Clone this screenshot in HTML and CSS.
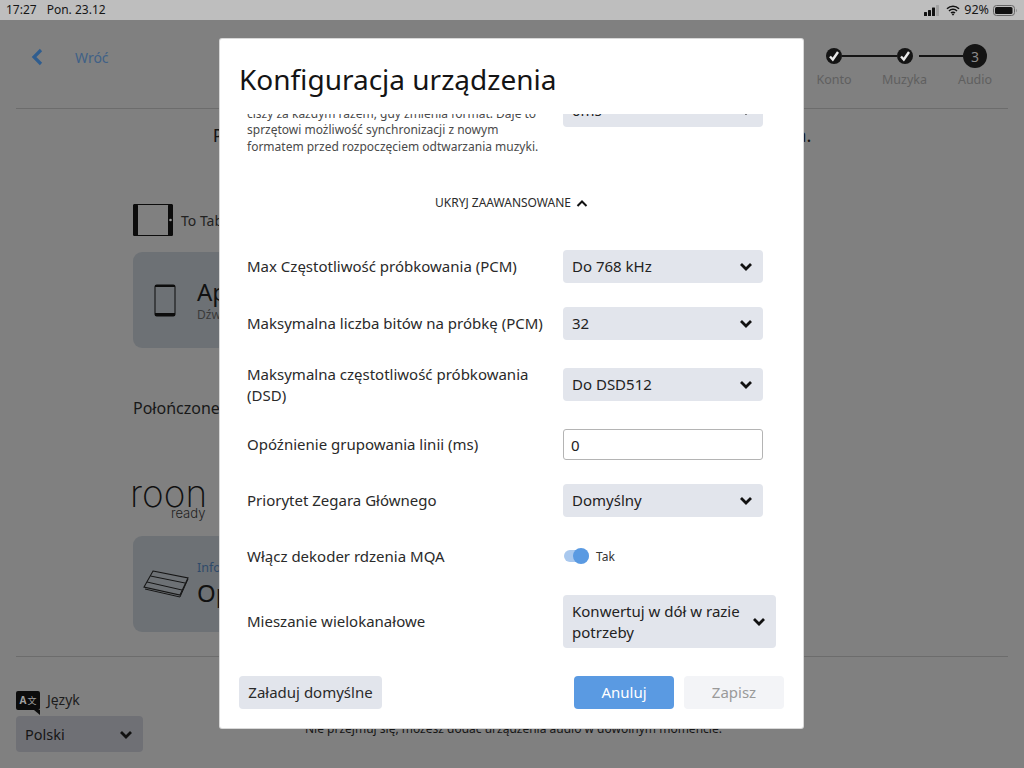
FILE: index.html
```html
<!DOCTYPE html>
<html lang="pl">
<head>
<meta charset="utf-8">
<title>Konfiguracja urządzenia</title>
<link rel="stylesheet" href="styles.css">
</head>
<body>
<div class="status">
  <div class="status-left"><span>17:27</span><span>Pon. 23.12</span></div>
  <div class="status-right">
    <svg class="sig" width="16" height="11" viewBox="0 0 16 11"><rect x="0" y="7" width="3" height="4" rx=".5"/><rect x="4" y="5" width="3" height="6" rx=".5"/><rect x="8" y="2.500" width="3" height="8.500" rx=".5"/><rect x="12" y="0" width="3" height="11" rx=".5" fill="#a2a2a2"/></svg>
    <svg width="14" height="11" viewBox="0 0 14 11"><path d="M1 3.800a8.500 8.500 0 0 1 12 0M3 6a5.600 5.600 0 0 1 8 0M5 8.100a2.800 2.800 0 0 1 4 0" fill="none" stroke="#111" stroke-width="1.500"/><path d="M5.700 9l1.300 1.700L8.300 9a2 2 0 0 0-2.600 0z" fill="#111"/></svg>
    <span>92%</span>
    <svg width="24" height="11" viewBox="0 0 24 11"><rect x=".5" y=".5" width="21" height="10" rx="3" fill="none" stroke="#666"/><rect x="2" y="2" width="17.500" height="7" rx="1.500" fill="#111"/><path d="M23 3.700c.7.300.7 3.300 0 3.600z" fill="#666"/></svg>
  </div>
</div>

<div class="page">
  <header class="top">
    <a class="back">
      <svg width="12" height="18" viewBox="0 0 12 18"><path d="M10 2L3 9l7 7" fill="none" stroke="#2f5d8f" stroke-width="3.200"/></svg>
      <span>Wróć</span>
    </a>
    <div class="stepper">
      <div class="dots">
        <span class="dot"><svg width="12" height="12" viewBox="0 0 12 12"><path d="M2 6.500l2.800 3L10 2" fill="none" stroke="#e8e8e8" stroke-width="2.400"/></svg></span>
        <span class="link l1"></span>
        <span class="dot"><svg width="12" height="12" viewBox="0 0 12 12"><path d="M2 6.500l2.800 3L10 2" fill="none" stroke="#e8e8e8" stroke-width="2.400"/></svg></span>
        <span class="link l2"></span>
        <span class="dot now">3</span>
      </div>
      <div class="names"><span>Konto</span><span>Muzyka</span><span>Audio</span></div>
    </div>
  </header>

  <main class="body">
    <h2 class="lead">Proszę wybrać urządzenie audio, którego chcesz używać do słuchania.</h2>
    <div class="this">
      <svg width="40" height="32" viewBox="0 0 40 32"><rect x=".5" y=".5" width="39" height="31" rx="1.500" fill="none" stroke="#0c0c0c"/><rect x="0" y="0" width="5" height="32" rx="1.500" fill="#0c0c0c"/><rect x="35" y="0" width="5" height="32" rx="1.500" fill="#0c0c0c"/><circle cx="37.500" cy="16" r="1.300" fill="#999"/></svg>
      <span>To Tablet</span>
    </div>
    <div class="card c1">
      <svg width="22" height="33" viewBox="0 0 22 33"><rect x="1" y="1" width="20" height="31" rx="1.500" fill="none" stroke="#0c0c0c"/><rect x="1" y="1" width="20" height="2" fill="#0c0c0c"/><rect x="1" y="29" width="20" height="3" fill="#0c0c0c"/></svg>
      <div class="card-text"><strong>Apple</strong><small>Dźwięk</small></div>
    </div>
    <div class="sect">Połończone</div>
    <div class="roon"><span class="roon-word">roon</span><span class="roon-sub">ready</span></div>
    <div class="card c2">
      <svg width="48" height="30" viewBox="0 0 48 30"><path d="M11 2l35 7-8 17-36-8z" fill="none" stroke="#161616" stroke-width="1.100"/><path d="M8.500 7l34.500 7M5 13l35 8M3 20l35 8 8-18" fill="none" stroke="#161616" stroke-width="1"/></svg>
      <div class="card-text"><em>Informacje</em><strong>Opcje</strong></div>
    </div>
  </main>

  <footer class="bottom">
    <div class="lang">
      <div class="lang-label">
        <span class="lang-ico"><b>A</b><i>文</i></span>
        <span>Język</span>
      </div>
      <div class="lang-select"><span>Polski</span>
        <svg class="chev" width="14" height="10" viewBox="0 0 14 10"><path d="M2 2l5 5 5-5" fill="none" stroke="#111" stroke-width="2.800"/></svg>
      </div>
    </div>
    <p class="note">Nie przejmuj się, możesz dodać urządzenia audio w dowolnym momencie.</p>
  </footer>
</div>

<section class="modal">
  <h1>Konfiguracja urządzenia</h1>
  <div class="scroll">
    <div class="inner">
      <div class="row desc">
        <p>Odtwarzacz wstawia krótki fragment<br>ciszy za każdym razem, gdy zmienia format. Daje to<br>sprzętowi możliwość synchronizacji z nowym<br>formatem przed rozpoczęciem odtwarzania muzyki.</p>
        <div class="sel"><span>0ms</span><svg class="chev" width="14" height="10" viewBox="0 0 14 10"><path d="M2 2l5 5 5-5" fill="none" stroke="#111" stroke-width="2.800"/></svg></div>
      </div>
      <div class="toggle-adv"><span>UKRYJ ZAAWANSOWANE</span>
        <svg width="12" height="9" viewBox="0 0 12 9"><path d="M1.500 7L6 2.500 10.500 7" fill="none" stroke="#111" stroke-width="2"/></svg>
      </div>
      <div class="rows">
        <div class="row"><label>Max Częstotliwość próbkowania (PCM)</label><div class="sel"><span>Do 768 kHz</span><svg class="chev" width="14" height="10" viewBox="0 0 14 10"><path d="M2 2l5 5 5-5" fill="none" stroke="#111" stroke-width="2.800"/></svg></div></div>
        <div class="row"><label>Maksymalna liczba bitów na próbkę (PCM)</label><div class="sel"><span>32</span><svg class="chev" width="14" height="10" viewBox="0 0 14 10"><path d="M2 2l5 5 5-5" fill="none" stroke="#111" stroke-width="2.800"/></svg></div></div>
        <div class="row"><label>Maksymalna częstotliwość próbkowania (DSD)</label><div class="sel"><span>Do DSD512</span><svg class="chev" width="14" height="10" viewBox="0 0 14 10"><path d="M2 2l5 5 5-5" fill="none" stroke="#111" stroke-width="2.800"/></svg></div></div>
        <div class="row"><label>Opóźnienie grupowania linii (ms)</label><div class="input">0</div></div>
        <div class="row"><label>Priorytet Zegara Głównego</label><div class="sel"><span>Domyślny</span><svg class="chev" width="14" height="10" viewBox="0 0 14 10"><path d="M2 2l5 5 5-5" fill="none" stroke="#111" stroke-width="2.800"/></svg></div></div>
        <div class="row tall"><label>Włącz dekoder rdzenia MQA</label><div class="switch"><span class="track"><span class="knob"></span></span><span class="switch-text">Tak</span></div></div>
        <div class="row"><label>Mieszanie wielokanałowe</label><div class="sel wide"><span>Konwertuj w dół w razie potrzeby</span><svg class="chev" width="14" height="10" viewBox="0 0 14 10"><path d="M2 2l5 5 5-5" fill="none" stroke="#111" stroke-width="2.800"/></svg></div></div>
      </div>
    </div>
  </div>
  <div class="actions">
    <button class="btn ghost">Załaduj domyślne</button>
    <div class="actions-right">
      <button class="btn primary">Anuluj</button>
      <button class="btn off">Zapisz</button>
    </div>
  </div>
</section>
</body>
</html>
```
FILE: styles.css
```css
* { box-sizing: border-box; }
html, body { margin: 0; height: 768px; overflow: hidden; }
body { background: #808080; font-family: "Noto Sans", sans-serif; color: #111; position: relative; }

.status { height: 20px; background: #bebebe; display: flex; justify-content: space-between; align-items: center; padding: 0 7px 0 6px; font-size: 12px; line-height: 20px; color: #161616; }
.status-left { display: flex; gap: 10px; }
.status-right { display: flex; align-items: center; gap: 4px; font-size: 12.500px; }
.sig { fill: #111; margin-right: 2px; }
.chev { margin-top: 1px; flex: none; }

.page { height: 748px; display: flex; flex-direction: column; }
.top { height: 89px; margin: 0 16px; border-bottom: 1px solid #6c6c6c; display: flex; justify-content: space-between; flex: none; }
.back { display: flex; align-items: center; gap: 32px; height: 74px; padding-left: 15px; font-size: 14px; color: #3f6087; }
.stepper { padding: 24px 3px 0 0; width: 204px; }
.dots { display: flex; align-items: center; height: 24px; padding-left: 22px; }
.dot { width: 16px; height: 16px; border-radius: 50%; background: #141414; display: flex; align-items: center; justify-content: center; flex: none; }
.dot.now { width: 24px; height: 24px; color: #8a8a8a; font-size: 14px; }
.link { height: 2px; background: #141414; flex: none; }
.l1 { width: 55px; }
.l2 { width: 44px; margin-left: 6px; }
.names { display: grid; grid-template-columns: 60px 60px 60px; column-gap: 10.500px; margin-top: 3px; font-size: 12.500px; line-height: 18px; color: #5f5f5f; text-align: center; }

.body { flex: 1; padding: 0 0 0 133px; min-height: 0; }
.lead { margin: 13px 0 0 -133px; font-size: 18.300px; font-weight: 400; line-height: 26px; text-align: center; white-space: nowrap; color: #151515; }
.this { display: flex; align-items: center; gap: 8px; margin-top: 56px; font-size: 14px; color: #222; height: 32px; }
.card { width: 300px; height: 96px; border-radius: 9px; background: #6d7175; display: flex; align-items: center; }
.c1 { margin-top: 16px; padding-left: 21px; gap: 21px; }
.c2 { margin-top: 16px; padding-left: 9px; gap: 7px; }
.card-text { display: flex; flex-direction: column; }
.card-text strong { font-weight: 400; font-size: 24px; line-height: 30px; color: #111; }
.card-text em + strong { margin-top: 2px; }
.card-text small { font-size: 12px; line-height: 16px; color: #3a3a3a; }
.card-text em { font-style: normal; font-size: 12.500px; line-height: 16px; color: #2f4a6a; }
.sect { margin-top: 48px; font-size: 16px; line-height: 24px; color: #181818; }
.roon { margin-top: 59px; height: 41px; width: 71px; display: flex; flex-direction: column; align-items: flex-start; }
.roon-word { font-family: "Inter", sans-serif; font-weight: 200; font-size: 37px; line-height: 30px; display: block; color: #101010; margin-left: -3px; }
.roon-sub { font-family: "Inter", sans-serif; font-weight: 300; font-size: 13px; line-height: 14px; margin: -3px 0 0 38px; color: #222; }

.bottom { height: 112px; margin: 0 16px; border-top: 1px solid #6c6c6c; flex: none; display: flex; position: relative; }
.lang { padding-top: 31px; }
.lang-label { display: flex; align-items: center; gap: 7px; font-size: 14px; line-height: 24px; color: #1c1c1c; }
.lang-ico { width: 24px; height: 19px; background: #0c0c0c; border-radius: 2px; color: #a0a0a0; font-size: 10px; line-height: 19px; display: flex; justify-content: center; gap: 1px; position: relative; }
.lang-ico::after { content: ""; position: absolute; right: 0; bottom: -5px; border-left: 6px solid transparent; border-top: 5px solid #0c0c0c; }
.lang-ico b { font-weight: 700; }
.lang-ico i { font-style: normal; font-family: "Noto Sans CJK SC", sans-serif; font-size: 9px; }
.lang-select { width: 127px; height: 36px; margin-top: 4px; border-radius: 4px; background: #6f7075; display: flex; align-items: center; justify-content: space-between; padding: 0 10px 0 9px; font-size: 14.500px; color: #161616; }
.note { margin: 63px 0 0 0; font-size: 12px; line-height: 18px; position: absolute; left: 289px; white-space: nowrap; color: #151515; }

.modal { position: absolute; left: 220px; top: 39px; width: 583px; height: 689px; background: #fff; border-radius: 2px; display: flex; flex-direction: column; box-shadow: 0 0 0 1px #d8d8d8; }
.modal h1 { margin: 0; height: 75px; flex: none; padding: 21px 0 0 19px; font-size: 28px; font-weight: 400; line-height: 38px; color: #141414; overflow: hidden; }
.scroll { flex: 1; min-height: 0; overflow: hidden; }
.inner { margin-top: -37px; padding: 0 27px; }
.row { display: flex; align-items: center; }
.row label { width: 316px; flex: none; font-size: 15px; line-height: 20.500px; color: #2a2a2a; padding-right: 10px; }
.desc { align-items: flex-start; }
.desc p { width: 316px; flex: none; margin: 0; padding: 12px 10px 0 0; font-size: 12px; line-height: 16.500px; color: #4a4a4a; }
.desc .sel { margin-top: 17px; }
.sel { width: 200px; min-height: 33px; background: #e2e5ec; border-radius: 4px; display: flex; align-items: center; justify-content: space-between; padding: 0 10px 0 9px; font-size: 15px; line-height: 21px; color: #222; flex: none; }
.sel.wide { width: 213px; height: 53px; padding-right: 10px; }
.sel.wide span { width: 180px; }
.input { width: 200px; height: 31px; border: 1px solid #b4b4b4; border-radius: 3px; padding: 0 7px; font-size: 15px; line-height: 31px; color: #222; }
.toggle-adv { display: flex; justify-content: center; align-items: center; gap: 5px; margin-top: 38px; font-size: 12px; line-height: 20px; color: #2a2a2a; }
.rows { display: flex; flex-direction: column; gap: 24px; margin-top: 37px; }
.tall { height: 30px; }
.switch { display: flex; align-items: center; gap: 7px; padding-left: 1px; }
.track { display: block; width: 25px; height: 12px; border-radius: 6px; background: #a9c8ee; position: relative; }
.knob { position: absolute; right: 0; top: -2px; width: 16px; height: 16px; border-radius: 50%; background: #5a9ae2; }
.switch-text { font-size: 12px; color: #333; }
.actions { height: 68px; flex: none; padding: 16px 19px 0; display: flex; justify-content: space-between; align-items: flex-start; }
.actions-right { display: flex; gap: 10px; }
.btn { height: 33px; border: 0; border-radius: 4px; font-family: inherit; font-size: 15px; line-height: 33px; padding: 0; }
.ghost { width: 143px; background: #e2e5ec; color: #2a2a2a; }
.primary { width: 100px; background: #5a9ae2; color: #fff; }
.off { width: 100px; background: #f3f4f7; color: #9a9a9a; }
```
